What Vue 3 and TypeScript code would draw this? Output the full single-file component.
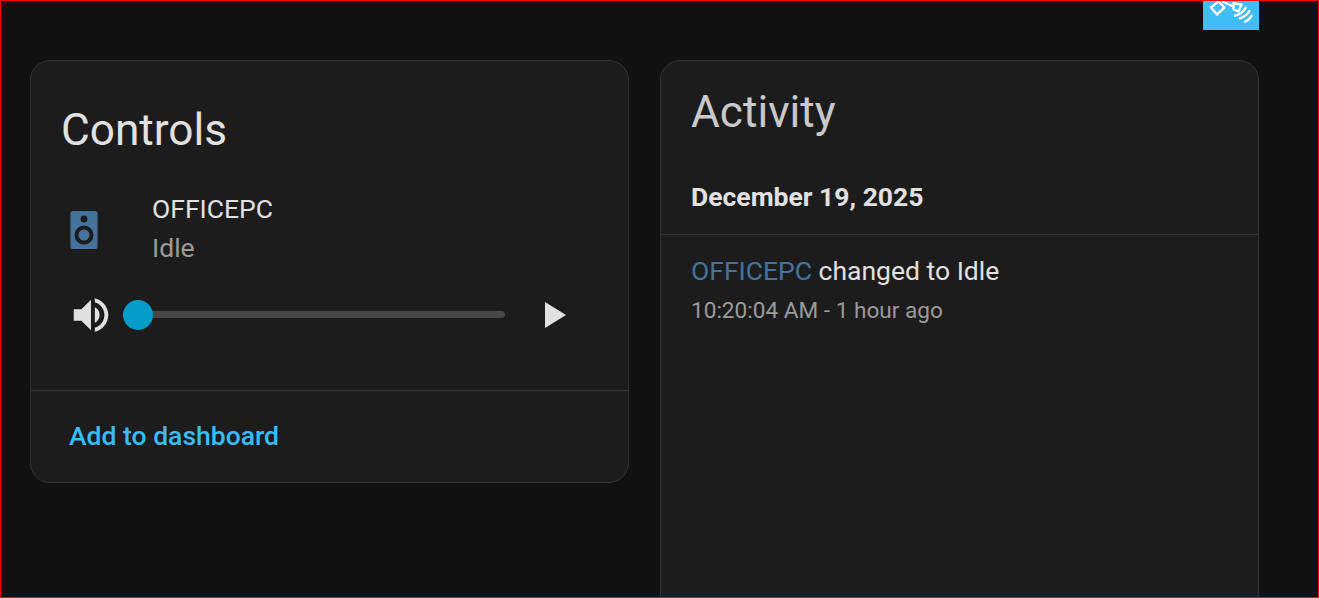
<template>
  <div class="page">
    <div class="topbar">
      <div class="badge">
        <svg viewBox="0 0 56 30" width="56" height="30">
          <g fill="none" stroke="#fff" stroke-width="2.4" stroke-linecap="round" stroke-linejoin="round">
            <path d="M8 7.5L15.3 1.5L21.5 7.5L14 14.5Z" />
            <path d="M20.5 2L29 6" />
            <path d="M30.5 3.5L38.5 4.5L35.5 11.5L30.5 9.5Z" />
            <path d="M32 15.7Q39.5 14 42.7 7.5" />
            <path d="M37 18.3Q43.5 16 46.3 11" />
            <path d="M42 21.7Q46.5 20 48.7 15.5" />
          </g>
        </svg>
      </div>
    </div>
    <div class="cards">
      <section class="card controls">
        <div class="controls-body">
          <h2 class="controls-title">Controls</h2>
          <div class="entity">
            <svg class="speaker" viewBox="0 0 28 38" width="28" height="38">
              <path
                fill="#44739e"
                fill-rule="evenodd"
                d="M3 0H25A2.5 2.5 0 0 1 27.5 2.5V35.5A2.5 2.5 0 0 1 25 38H3A2.5 2.5 0 0 1 0.5 35.5V2.5A2.5 2.5 0 0 1 3 0ZM14 4.5A3.5 3.5 0 1 0 14 11.5A3.5 3.5 0 1 0 14 4.5ZM14 14.5A9.5 9.5 0 1 0 14 33.5A9.5 9.5 0 1 0 14 14.5ZM14 18.5A5.5 5.5 0 1 1 14 29.5A5.5 5.5 0 1 1 14 18.5Z"
              />
            </svg>
            <div class="entity-text">
              <div class="entity-name">OFFICEPC</div>
              <div class="entity-state">Idle</div>
            </div>
          </div>
          <div class="player">
            <svg class="volume" viewBox="0 0 24 24" width="46" height="46">
              <path
                fill="#e1e1e1"
                d="M3,9V15H7L12,20V4L7,9H3M16.5,12C16.5,10.23 15.5,8.71 14,7.97V16.02C15.5,15.29 16.5,13.76 16.5,12M14,3.23V5.29C16.89,6.15 19,8.83 19,12C19,15.17 16.89,17.84 14,18.7V20.77C18,19.86 21,16.28 21,12C21,7.72 18,4.14 14,3.23Z"
              />
            </svg>
            <div class="slider">
              <div class="track"></div>
              <div class="thumb"></div>
            </div>
            <svg class="play" viewBox="0 0 21 26" width="21" height="26">
              <path fill="#e1e1e1" d="M0 0L21 13L0 26Z" />
            </svg>
          </div>
        </div>
        <div class="controls-footer">
          <span class="add-link">Add to dashboard</span>
        </div>
      </section>

      <section class="card activity">
        <h2 class="activity-title">Activity</h2>
        <div class="date-row">{{ log.date }}</div>
        <div class="log-entry">
          <div class="log-line"><span class="log-entity">{{ log.entity }}</span> {{ log.message }}</div>
          <div class="log-time">{{ log.time }}</div>
        </div>
      </section>
    </div>
  </div>
</template>

<script setup lang="ts">
const log = {
  date: 'December 19, 2025',
  entity: 'OFFICEPC',
  message: 'changed to Idle',
  time: '10:20:04 AM - 1 hour ago'
}
</script>

<style>
html,
body {
  margin: 0;
  background: #111111;
}
</style>

<style scoped>
.page {
  box-sizing: border-box;
  width: 1319px;
  height: 598px;
  overflow: hidden;
  border: 1px solid #ff0000;
  background: #111111;
  font-family: Roboto, 'Noto Sans', sans-serif;
}

.topbar {
  display: flex;
  justify-content: flex-end;
  height: 29px;
  padding-right: 59px;
}

.badge {
  width: 56px;
  height: 29px;
  background: #41bdf5;
  overflow: hidden;
}

.badge svg {
  display: block;
  margin-top: -1px;
}

.cards {
  display: flex;
  align-items: flex-start;
  gap: 31px;
  padding: 30px 0 0 29px;
}

.card {
  box-sizing: border-box;
  width: 599px;
  background: #1c1c1c;
  border: 1px solid #333333;
  border-radius: 20px;
}

.controls {
  height: 423px;
  display: flex;
  flex-direction: column;
}

.controls-body {
  flex: 1;
  padding: 41px 30px 0;
}

.controls-title {
  margin: 0;
  font-size: 44.2px;
  line-height: 56px;
  font-weight: 400;
  color: #e1e1e1;
}

.entity {
  display: flex;
  align-items: center;
  margin-top: 31px;
  padding-left: 9px;
}

.speaker {
  margin-top: 4px;
}

.entity-text {
  margin-left: 54px;
}

.entity-name {
  font-size: 26.5px;
  line-height: 40px;
  color: #e1e1e1;
}

.entity-state {
  font-size: 26.5px;
  line-height: 38px;
  color: #9b9b9b;
}

.player {
  display: flex;
  align-items: center;
  margin-top: 25px;
  padding-left: 7px;
}

.slider {
  position: relative;
  width: 382px;
  height: 30px;
  margin-left: 9px;
}

.track {
  position: absolute;
  left: 0;
  right: 0;
  top: 11px;
  height: 7px;
  border-radius: 4px;
  background: #484848;
}

.thumb {
  position: absolute;
  left: 0;
  top: 0;
  width: 30px;
  height: 30px;
  border-radius: 50%;
  background: #039bc8;
}

.play {
  margin-left: 40px;
}

.controls-footer {
  height: 92px;
  display: flex;
  align-items: center;
  padding: 0 0 3px 38px;
  box-sizing: border-box;
  border-top: 1px solid #333333;
}

.add-link {
  font-size: 26.5px;
  font-weight: 500;
  color: #38bdf8;
}

.activity {
  height: 700px;
}

.activity-title {
  margin: 0;
  padding: 23px 30px 0;
  font-size: 44.2px;
  line-height: 56px;
  font-weight: 400;
  color: #c9c9c9;
}

.date-row {
  padding: 37px 30px 17px;
  font-size: 26.5px;
  line-height: 40px;
  font-weight: 700;
  color: #e1e1e1;
  border-bottom: 1px solid #333333;
}

.log-entry {
  padding: 16px 30px;
}

.log-line {
  font-size: 26.5px;
  line-height: 40px;
  color: #e1e1e1;
}

.log-entity {
  color: #44739e;
}

.log-time {
  margin-top: 1px;
  font-size: 22.6px;
  line-height: 38px;
  color: #9b9b9b;
}
</style>
